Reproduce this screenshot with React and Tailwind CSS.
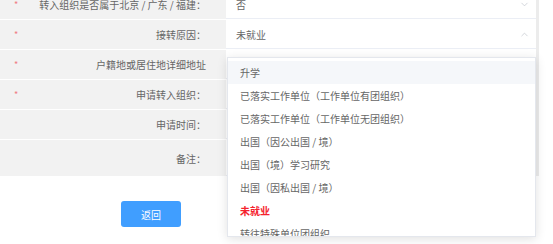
import { ChevronDown, ChevronUp } from "lucide-react";

const ROWS = [
  { label: "转入组织是否属于北京 / 广东 / 福建：", required: true, value: "否", icon: "down" },
  { label: "接转原因：", required: true, value: "未就业", icon: "up" },
  { label: "户籍地或居住地详细地址", required: true },
  { label: "申请转入组织：", required: true },
  { label: "申请时间：" },
  { label: "备注：", tall: true },
];

const OPTIONS = [
  "升学",
  "已落实工作单位（工作单位有团组织）",
  "已落实工作单位（工作单位无团组织）",
  "出国（因公出国 / 境）",
  "出国（境）学习研究",
  "出国（因私出国 / 境）",
  "未就业",
  "转往特殊单位团组织",
];

export default function App() {
  return (
    <div
      className="relative w-[553px] h-[244px] overflow-hidden bg-white text-[10px] text-[#666]"
      style={{ fontFamily: '"Noto Sans CJK SC", "Noto Sans", sans-serif' }}
    >
      {/* form table */}
      <div className="-mt-[10px] w-[539px] flex flex-col gap-px border-r-[3px] border-[#ececec]">
        {ROWS.map((r, i) => (
          <div key={i} className={`flex ${r.tall ? "h-[36px]" : "h-[29px]"}`}>
            <div className="w-[226px] bg-[#f2f2f2] flex items-center pr-[20px]">
              <span className="w-[30px] pl-[14px] text-[#f07c82] text-[9px]">{r.required ? "*" : ""}</span>
              <span className="flex-1 text-right whitespace-nowrap">{r.label}</span>
            </div>
            <div className="flex-1 bg-white border-b border-[#ebeef5] flex items-center pl-[10px] pr-[6px]">
              <span className="flex-1">{r.value}</span>
              {r.icon === "down" && <ChevronDown size={11} strokeWidth={1.5} className="text-[#c0c4cc]" />}
              {r.icon === "up" && <ChevronUp size={11} strokeWidth={1.5} className="text-[#c0c4cc]" />}
            </div>
          </div>
        ))}
      </div>

      {/* actions */}
      <div className="mt-[25px] pl-[121px]">
        <button className="w-[60px] h-[26px] rounded-[3px] bg-[#409eff] text-white text-[10px]">返回</button>
      </div>

      {/* select dropdown */}
      <div className="absolute left-[227px] top-[57px] w-[309px] h-[180px] bg-white border border-[#e4e7ed] shadow-[0_2px_10px_rgba(0,0,0,0.12)] pt-[3px] overflow-hidden">
        {OPTIONS.map((o, i) => (
          <div
            key={i}
            className={`h-[23px] flex items-center px-[12px] whitespace-nowrap ${i === 0 ? "bg-[#f5f7fa]" : ""} ${
              o === "未就业" ? "text-[#f5222d] font-bold" : ""
            }`}
          >
            {o}
          </div>
        ))}
      </div>
    </div>
  );
}
